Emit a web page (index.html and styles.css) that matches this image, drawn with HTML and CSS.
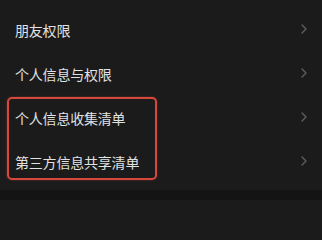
FILE: index.html
```html
<!DOCTYPE html>
<html lang="zh">
<head>
<meta charset="utf-8">
<link rel="stylesheet" href="styles.css">
</head>
<body>
<div class="screen">
  <div class="list">
    <div class="row"><span class="label">朋友权限</span><span class="chev"><svg width="6" height="10" viewBox="0 0 6 10"><path d="M1 1 L5 5 L1 9" fill="none" stroke="#5e5e5e" stroke-width="1.4" stroke-linecap="round" stroke-linejoin="round"/></svg></span></div>
    <div class="row"><span class="label">个人信息与权限</span><span class="chev"><svg width="6" height="10" viewBox="0 0 6 10"><path d="M1 1 L5 5 L1 9" fill="none" stroke="#5e5e5e" stroke-width="1.4" stroke-linecap="round" stroke-linejoin="round"/></svg></span></div>
    <div class="row"><span class="label">个人信息收集清单</span><span class="chev"><svg width="6" height="10" viewBox="0 0 6 10"><path d="M1 1 L5 5 L1 9" fill="none" stroke="#5e5e5e" stroke-width="1.4" stroke-linecap="round" stroke-linejoin="round"/></svg></span></div>
    <div class="row"><span class="label">第三方信息共享清单</span><span class="chev"><svg width="6" height="10" viewBox="0 0 6 10"><path d="M1 1 L5 5 L1 9" fill="none" stroke="#5e5e5e" stroke-width="1.4" stroke-linecap="round" stroke-linejoin="round"/></svg></span></div>
  </div>
  <div class="footer"></div>
  <div class="highlight"></div>
</div>
</body>
</html>
```
FILE: styles.css
```css
html, body {
  margin: 0;
  padding: 0;
  background: #1b1b1b;
}
.screen {
  position: relative;
  width: 322px;
  height: 200px;
  overflow: hidden;
  background: #1b1b1b;
  display: flex;
  flex-direction: column;
  font-family: "Noto Sans CJK SC", "Noto Sans", sans-serif;
}
.list {
  padding-top: 8px;
  flex: 0 0 auto;
}
.row {
  height: 44px;
  display: flex;
  align-items: center;
  justify-content: space-between;
  padding: 0 15px 0 15px;
}
.label {
  color: #e2e2e2;
  font-size: 14px;
  line-height: 20px;
  letter-spacing: -0.2px;
}
.chev {
  display: flex;
  align-items: center;
  margin-top: -2px;
}
.chev svg {
  display: block;
}
.footer {
  margin-top: 6px;
  flex: 1 1 auto;
  background: #141414;
}
.highlight {
  position: absolute;
  left: 7px;
  top: 97px;
  width: 146px;
  height: 79px;
  border: 2px solid #d4493c;
  border-radius: 5px;
  box-shadow: 0 0 2px rgba(210, 70, 60, 0.6);
}
```
